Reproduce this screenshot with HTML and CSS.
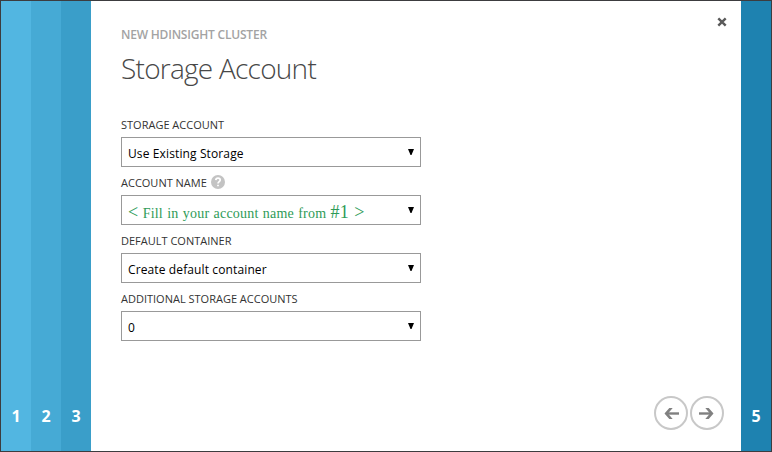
FILE: index.html
```
<!DOCTYPE html>
<html lang="en">
<head>
<meta charset="utf-8">
<title>New HDInsight Cluster</title>
<link rel="stylesheet" href="styles.css">
</head>
<body>
<div class="wizard">
  <nav class="steps">
    <div class="step step-1">1</div>
    <div class="step step-2">2</div>
    <div class="step step-3">3</div>
  </nav>
  <main class="panel">
    <svg class="close" width="10" height="10" viewBox="0 0 10 10"><path d="M1.3 1.3l7.4 7.4M8.7 1.3L1.3 8.7"/></svg>
    <h2 class="eyebrow">NEW HDINSIGHT CLUSTER</h2>
    <h1 class="title">Storage Account</h1>
    <form class="form">
      <div class="field">
        <div class="label">STORAGE ACCOUNT</div>
        <div class="select"><span>Use Existing Storage</span><svg class="caret" width="6" height="6" viewBox="0 0 6 6"><path d="M0 0h6L3.5 6h-1z"/></svg></div>
      </div>
      <div class="field">
        <div class="label">ACCOUNT NAME<svg class="help" width="14" height="14" viewBox="0 0 14 14"><circle cx="7" cy="7" r="7"/><path d="M4.8 5.1C4.9 3.8 5.8 3.2 7 3.2c1.3 0 2.2.7 2.2 1.8C9.2 6.6 7 6.6 7 8.5M7 9.7v1.6"/></svg></div>
        <div class="select hint"><span><span class="sign">&lt;</span> Fill in your account name from <span class="sign">#1 &gt;</span></span><svg class="caret" width="6" height="6" viewBox="0 0 6 6"><path d="M0 0h6L3.5 6h-1z"/></svg></div>
      </div>
      <div class="field">
        <div class="label">DEFAULT CONTAINER</div>
        <div class="select"><span>Create default container</span><svg class="caret" width="6" height="6" viewBox="0 0 6 6"><path d="M0 0h6L3.5 6h-1z"/></svg></div>
      </div>
      <div class="field">
        <div class="label">ADDITIONAL STORAGE ACCOUNTS</div>
        <div class="select"><span>0</span><svg class="caret" width="6" height="6" viewBox="0 0 6 6"><path d="M0 0h6L3.5 6h-1z"/></svg></div>
      </div>
    </form>
    <div class="pager">
      <svg width="34" height="34" viewBox="0 0 34 34"><circle cx="17" cy="17" r="16"/><path class="shaft" d="M25 17.500H12"/><path class="head" d="M15.300 12h3.400l-4.700 5.500 4.700 5.500h-3.400l-4.800-5.500z"/></svg>
      <svg width="34" height="34" viewBox="0 0 34 34"><circle cx="17" cy="17" r="16"/><path class="shaft" d="M9 17.500h13"/><path class="head" d="M18.700 12h-3.400l4.700 5.500-4.700 5.500h3.400l4.800-5.500z"/></svg>
    </div>
  </main>
  <nav class="steps">
    <div class="step step-5">5</div>
  </nav>
</div>
</body>
</html>
```
FILE: styles.css
```
* { box-sizing: border-box; }
body { margin: 0; font-family: "Open Sans", "Noto Sans", sans-serif; }
.wizard {
  display: flex;
  width: 772px;
  height: 452px;
  border: 1px solid #3c3c3f;
  background: #fff;
}
.steps { display: flex; }
.step {
  display: flex;
  align-items: flex-end;
  justify-content: center;
  width: 30px;
  padding-bottom: 24px;
  color: #fff;
  font-size: 16px;
  font-weight: 700;
  line-height: 22px;
}
.step-1 { background: #52b6e1; }
.step-2 { background: #46aad5; }
.step-3 { background: #3a9ec9; }
.step-5 { background: #1e82b0; }
.panel {
  position: relative;
  flex: 1;
  display: flex;
  flex-direction: column;
  padding: 25px 17px 21px 30px;
}
.close {
  position: absolute;
  top: 16px;
  right: 14px;
  fill: none;
  stroke: #5a5a5a;
  stroke-width: 2.4;
}
.eyebrow {
  margin: 0;
  color: #a3a3a3;
  font-size: 12px;
  font-weight: 600;
  line-height: 17px;
  letter-spacing: -0.2px;
}
.title {
  margin: 6px 0 0;
  color: #484848;
  font-size: 28px;
  font-weight: 300;
  line-height: 38px;
  letter-spacing: -0.75px;
}
.form { margin-top: 30px; width: 300px; }
.field { height: 58px; }
.label {
  display: flex;
  align-items: center;
  height: 20px;
  padding-bottom: 4px;
  color: #333;
  font-size: 11px;
  line-height: 16px;
  white-space: nowrap;
}
.help { margin: -2px 0 0 4px; fill: #c3c3c3; }
.help path { fill: none; stroke: #fff; stroke-width: 1.7; }
.select {
  display: flex;
  justify-content: space-between;
  height: 30px;
  padding: 7px 6px 0;
  border: 1px solid #999;
  color: #000;
  font-size: 12px;
  line-height: 17px;
  letter-spacing: 0.12px;
  white-space: nowrap;
}
.caret { margin-top: 4px; fill: #000; }
.hint {
  color: #2e9b57;
  font-family: "Liberation Serif", serif;
  font-size: 14px;
  line-height: 20px;
  letter-spacing: 0.2px;
  word-spacing: 0.6px;
}
.sign { font-size: 18px; line-height: 1; }
.pager { display: flex; gap: 2px; margin-top: auto; align-self: flex-end; }
.pager circle { fill: none; stroke: #c8c8c8; stroke-width: 2; }
.pager .shaft { fill: none; stroke: #808080; stroke-width: 2.4; }
.pager .head { fill: #808080; }
```
